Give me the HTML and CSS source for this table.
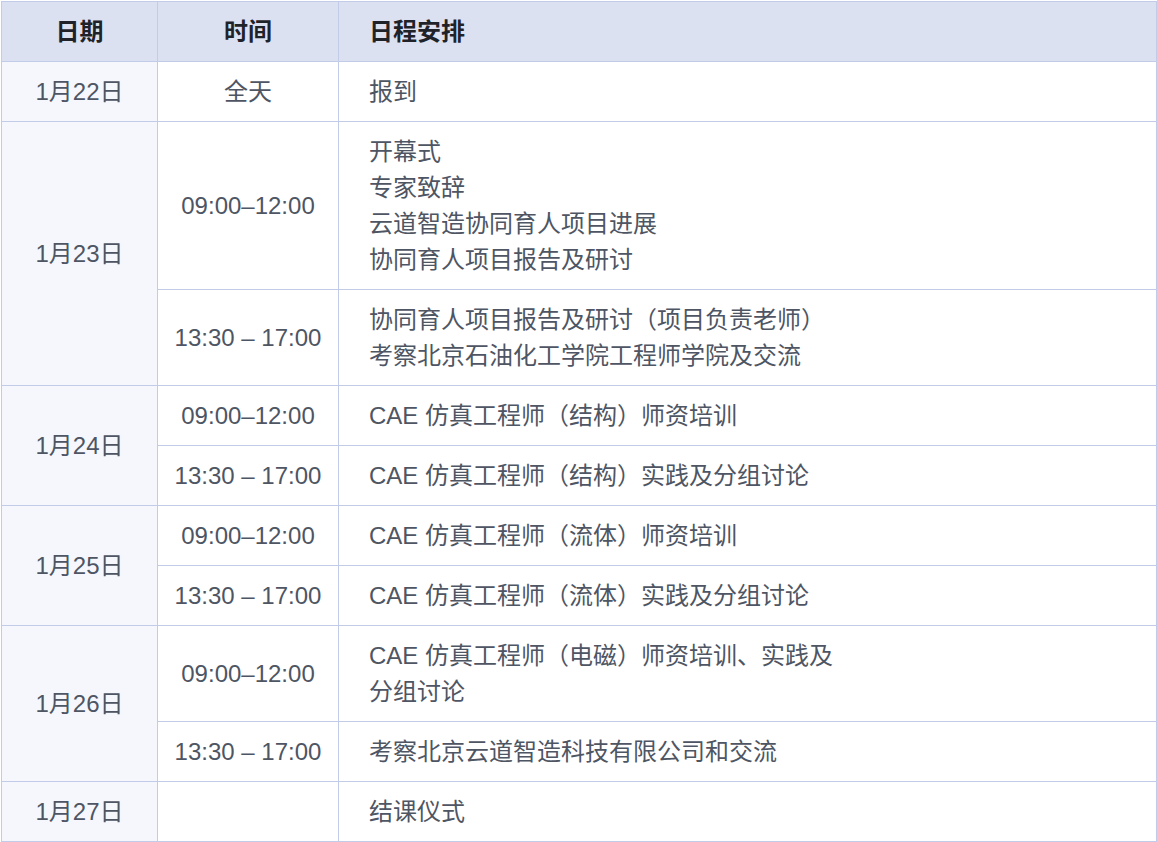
FILE: index.html
```html
<!DOCTYPE html>
<html lang="zh-CN">
<head>
<meta charset="utf-8">
<title>日程安排</title>
<link rel="stylesheet" href="styles.css">
</head>
<body>
<table class="schedule">
  <colgroup>
    <col class="c-date">
    <col class="c-time">
    <col class="c-plan">
  </colgroup>
  <thead>
    <tr>
      <th class="center">日期</th>
      <th class="center">时间</th>
      <th class="left">日程安排</th>
    </tr>
  </thead>
  <tbody>
    <tr>
      <td class="date">1月22日</td>
      <td class="time">全天</td>
      <td class="plan"><div class="txt">报到</div></td>
    </tr>
    <tr>
      <td class="date" rowspan="2">1月23日</td>
      <td class="time">09:00–12:00</td>
      <td class="plan"><div class="txt">开幕式<br>专家致辞<br>云道智造协同育人项目进展<br>协同育人项目报告及研讨</div></td>
    </tr>
    <tr>
      <td class="time">13:30 – 17:00</td>
      <td class="plan"><div class="txt">协同育人项目报告及研讨（项目负责老师）<br>考察北京石油化工学院工程师学院及交流</div></td>
    </tr>
    <tr>
      <td class="date" rowspan="2">1月24日</td>
      <td class="time">09:00–12:00</td>
      <td class="plan"><div class="txt">CAE 仿真工程师（结构）师资培训</div></td>
    </tr>
    <tr>
      <td class="time">13:30 – 17:00</td>
      <td class="plan"><div class="txt">CAE 仿真工程师（结构）实践及分组讨论</div></td>
    </tr>
    <tr>
      <td class="date" rowspan="2">1月25日</td>
      <td class="time">09:00–12:00</td>
      <td class="plan"><div class="txt">CAE 仿真工程师（流体）师资培训</div></td>
    </tr>
    <tr>
      <td class="time">13:30 – 17:00</td>
      <td class="plan"><div class="txt">CAE 仿真工程师（流体）实践及分组讨论</div></td>
    </tr>
    <tr>
      <td class="date" rowspan="2">1月26日</td>
      <td class="time">09:00–12:00</td>
      <td class="plan"><div class="txt">CAE 仿真工程师（电磁）师资培训、实践及分组讨论</div></td>
    </tr>
    <tr>
      <td class="time">13:30 – 17:00</td>
      <td class="plan"><div class="txt">考察北京云道智造科技有限公司和交流</div></td>
    </tr>
    <tr>
      <td class="date">1月27日</td>
      <td class="time"></td>
      <td class="plan"><div class="txt">结课仪式</div></td>
    </tr>
  </tbody>
</table>
</body>
</html>
```
FILE: styles.css
```css
html, body {
  margin: 0;
  padding: 0;
  background: #ffffff;
}

body {
  padding: 1px 0 0 1px;
  font-family: "Liberation Sans", "Noto Sans CJK SC", sans-serif;
  font-size: 24px;
  color: #4e5563;
}

.schedule {
  width: 1156px;
  table-layout: fixed;
  border-collapse: separate;
  border-spacing: 0;
  border-top: 1px solid #c2cbe8;
  border-left: 1px solid #c2cbe8;
}

.c-date { width: 156px; }
.c-time { width: 181px; }
.c-plan { width: 818px; }

.schedule th,
.schedule td {
  border-right: 1px solid #c2cbe8;
  border-bottom: 1px solid #c2cbe8;
  padding: 12px 0 11px 0;
  line-height: 36px;
  vertical-align: middle;
  font-weight: normal;
}

.schedule th {
  background: #dce1f2;
  color: #1f2329;
  font-weight: bold;
}

.schedule th.center { text-align: center; }
.schedule th.left { text-align: left; padding-left: 30px; }

.date {
  background: #f5f7fc;
  text-align: center;
}

.time {
  text-align: center;
  background: #ffffff;
}

.plan {
  text-align: left;
  padding-left: 30px !important;
  background: #ffffff;
}

.txt {
  max-width: 472px;
}
```
